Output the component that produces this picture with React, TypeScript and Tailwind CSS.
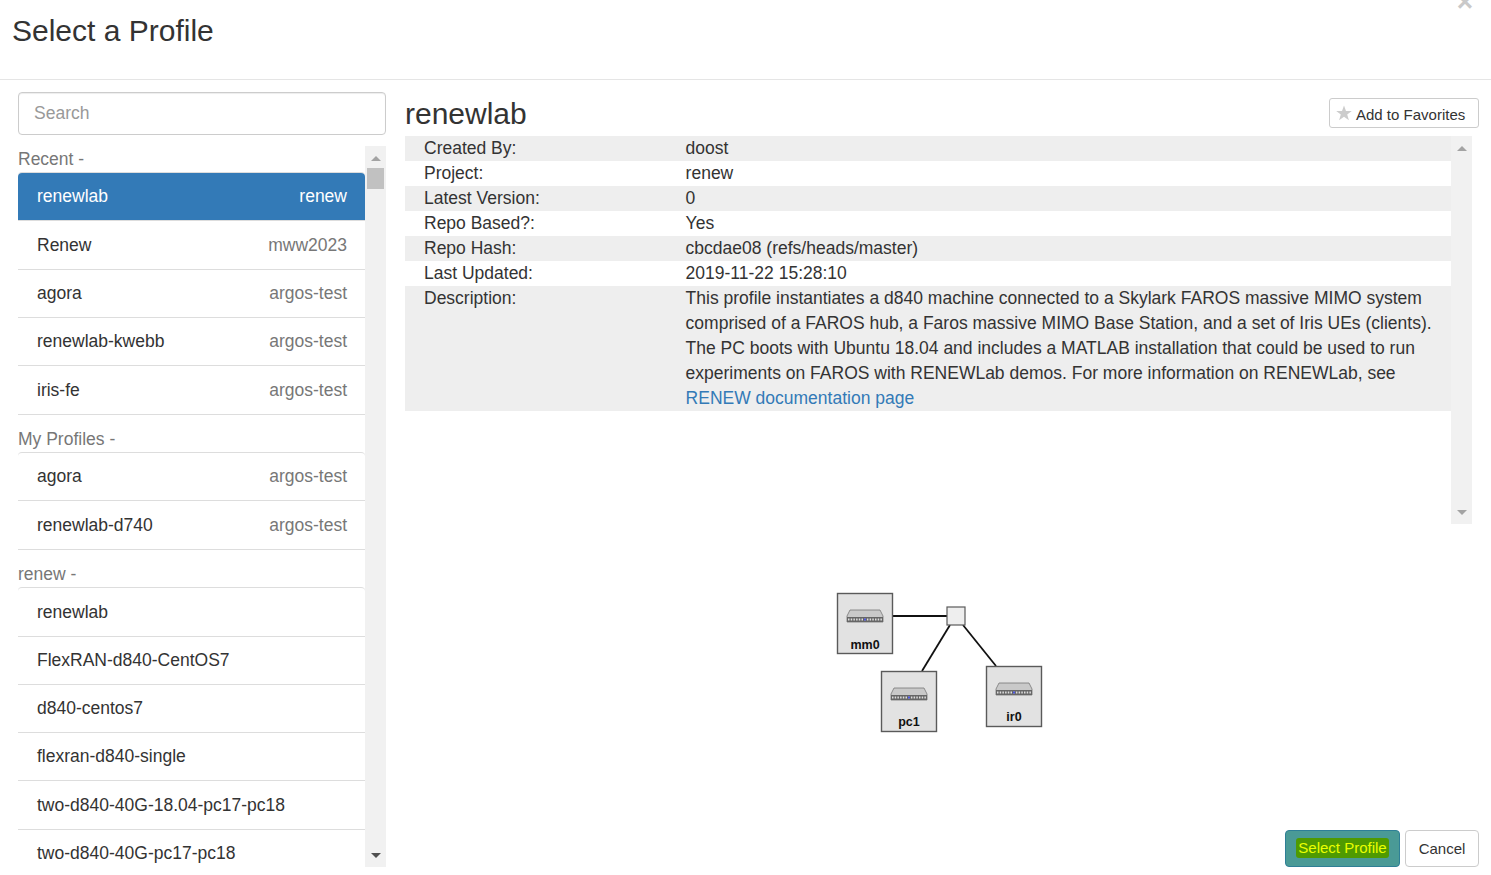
import React from 'react';

type Row = { name: string; owner?: string; active?: boolean; h: string };

const recent: Row[] = [
  { name: 'renewlab', owner: 'renew', active: true, h: 'h-12' },
  { name: 'Renew', owner: 'mww2023', h: 'h-[49px]' },
  { name: 'agora', owner: 'argos-test', h: 'h-12' },
  { name: 'renewlab-kwebb', owner: 'argos-test', h: 'h-12' },
  { name: 'iris-fe', owner: 'argos-test', h: 'h-[49px]' },
];

const mine: Row[] = [
  { name: 'agora', owner: 'argos-test', h: 'h-12' },
  { name: 'renewlab-d740', owner: 'argos-test', h: 'h-[49px]' },
];

const renew: Row[] = [
  { name: 'renewlab', h: 'h-[49px]' },
  { name: 'FlexRAN-d840-CentOS7', h: 'h-12' },
  { name: 'd840-centos7', h: 'h-12' },
  { name: 'flexran-d840-single', h: 'h-12' },
  { name: 'two-d840-40G-18.04-pc17-pc18', h: 'h-[49px]' },
  { name: 'two-d840-40G-pc17-pc18', h: 'h-12' },
];

const details: [string, React.ReactNode][] = [
  ['Created By:', 'doost'],
  ['Project:', 'renew'],
  ['Latest Version:', '0'],
  ['Repo Based?:', 'Yes'],
  ['Repo Hash:', 'cbcdae08 (refs/heads/master)'],
  ['Last Updated:', '2019-11-22 15:28:10'],
  [
    'Description:',
    <>
      This profile instantiates a d840 machine connected to a Skylark FAROS massive MIMO system
      comprised of a FAROS hub, a Faros massive MIMO Base Station, and a set of Iris UEs (clients).
      The PC boots with Ubuntu 18.04 and includes a MATLAB installation that could be used to run
      experiments on FAROS with RENEWLab demos. For more information on RENEWLab, see{' '}
      <a className="text-[#337ab7]">RENEW documentation page</a>
    </>,
  ],
];

function ProfileList({ rows }: { rows: Row[] }) {
  return (
    <div className="rounded-t-[4px] border-t border-[#ddd]">
      {rows.map((r, i) => (
        <div
          key={r.name + i}
          className={`flex items-center justify-between pl-[19px] pr-[18px] border-b border-[#ddd] ${r.h} ${
            r.active ? 'bg-[#337ab7] text-white rounded-t-[4px]' : 'text-[#333]'
          }`}
        >
          <span>{r.name}</span>
          {r.owner && <span className={r.active ? 'text-white' : 'text-[#777]'}>{r.owner}</span>}
        </div>
      ))}
    </div>
  );
}

function Scrollbar({ thumb }: { thumb?: boolean }) {
  return (
    <div className="w-[21px] shrink-0 bg-[#f1f1f1] flex flex-col items-center">
      <div className="h-6 w-full flex items-center justify-center shrink-0">
        <div className="w-0 h-0 border-x-[5px] border-x-transparent border-b-[5px] border-b-[#a3a3a3]" />
      </div>
      {thumb && <div className="w-[17px] h-[21px] bg-[#c1c1c1] mt-[-2px]" />}
      <div className="flex-1" />
      <div className="h-6 w-full flex items-center justify-center shrink-0">
        <div
          className={`w-0 h-0 border-x-[5px] border-x-transparent border-t-[5px] ${
            thumb ? 'border-t-[#505050]' : 'border-t-[#a3a3a3]'
          }`}
        />
      </div>
    </div>
  );
}

function Node({ x, y, label, w = 55, labelY = 56 }: { x: number; y: number; label: string; w?: number; labelY?: number }) {
  const cx = x + w / 2 + 0.5;
  return (
    <g>
      <rect x={x + 0.5} y={y + 0.5} width={w} height={60} fill="#e2e2e2" stroke="#5a5a5a" strokeWidth={1.4} />
      <path
        d={`M${cx - 15} ${y + 17} L${cx + 15} ${y + 17} L${cx + 18} ${y + 23} L${cx + 18} ${y + 29} L${cx - 18} ${y + 29} L${cx - 18} ${y + 23} Z`}
        fill="#c9c9c9"
        stroke="#777"
        strokeWidth={0.8}
      />
      <rect x={cx - 18} y={y + 24} width={36} height={5} fill="#666" />
      <line x1={cx - 17} x2={cx + 17} y1={y + 26.5} y2={y + 26.5} stroke="#ddd" strokeWidth={2} strokeDasharray="1.5 1.2" />
      <rect x={cx - 1} y={y + 25.5} width={2} height={2} fill="#4a55e0" />
      <text
        x={cx}
        y={y + labelY}
        textAnchor="middle"
        fontSize={12.5}
        fontWeight={700}
        fill="#111"
        fontFamily="'Liberation Sans', sans-serif"
      >
        {label}
      </text>
    </g>
  );
}

function Topology() {
  return (
    <svg width={240} height={160} viewBox="820 580 240 160" className="block">
      <line x1={893} y1={616} x2={947} y2={616} stroke="#111" strokeWidth={2.2} />
      <line x1={950} y1={625} x2={922} y2={671} stroke="#111" strokeWidth={1.8} />
      <line x1={963} y1={625} x2={996} y2={666} stroke="#111" strokeWidth={1.8} />
      <Node x={837} y={593} label="mm0" />
      <Node x={881} y={671} label="pc1" labelY={55} />
      <Node x={986} y={666} label="ir0" labelY={55} />
      <rect x={947} y={607} width={18} height={18} fill="#eee" stroke="#5a5a5a" strokeWidth={1.2} />
    </svg>
  );
}

export default function App() {
  return (
    <div className="w-[1491px] h-[875px] overflow-hidden bg-white font-['Liberation_Sans',Arial,sans-serif] text-[17.5px] leading-[25px] text-[#333] relative">
      <header className="h-20 border-b border-[#e5e5e5] pl-3 pt-[13px]">
        <h1 className="text-[30px] leading-[36px]">Select a Profile</h1>
      </header>
      <span className="absolute right-[18px] top-[-12px] text-[28px] font-bold leading-[28px] text-[#c9c9c9]">×</span>

      <div className="flex h-[795px]">
        <aside className="w-[405px] shrink-0 pl-[18px] pr-[19px] pt-3 pb-2 flex flex-col">
          <input
            placeholder="Search"
            className="w-full h-[43px] shrink-0 border border-[#ccc] rounded-[4px] px-[15px] outline-none placeholder:text-[#999] shadow-[inset_0_1px_1px_rgba(0,0,0,0.075)]"
          />
          <div className="flex flex-1 min-h-0 mt-[11px]">
            <div className="flex-1 min-w-0 overflow-hidden pt-[1px]">
              <div className="text-[#777] h-[25px] leading-[24px]">Recent -</div>
              <ProfileList rows={recent} />
              <div className="text-[#777] h-[37px] pt-[12px] leading-[24px]">My Profiles -</div>
              <ProfileList rows={mine} />
              <div className="text-[#777] h-[37px] pt-[12px] leading-[24px]">renew -</div>
              <ProfileList rows={renew} />
            </div>
            <Scrollbar thumb />
          </div>
        </aside>

        <main className="flex-1 min-w-0 flex flex-col pr-3">
          <div className="flex items-start justify-between h-[56px] shrink-0">
            <h2 className="text-[30px] leading-[36px] mt-[16px]">renewlab</h2>
            <button className="mt-[18px] h-[30px] w-[150px] flex items-center pl-[6px] pt-[2px] gap-[4px] border border-[#ccc] rounded-[3px] text-[15px] whitespace-nowrap">
              <svg width={16} height={16} viewBox="0 0 16 16" className="mt-[-3px]">
                <polygon points="8,0.5 10,6 15.8,6 11.2,9.5 12.9,15.3 8,11.8 3.1,15.3 4.8,9.5 0.2,6 6,6" fill="#ccc" />
              </svg>
              Add to Favorites
            </button>
          </div>

          <div className="flex h-[388px] w-[1067px] shrink-0">
            <div className="flex-1 min-w-0">
              {details.map(([k, v], i) => (
                <div key={k as string} className={`flex ${i % 2 === 0 ? 'bg-[#eee]' : 'bg-white'}`}>
                  <div className="w-[280.6px] shrink-0 pl-[19px]">{k}</div>
                  <div className="flex-1 min-w-0 pr-[8px]">{v}</div>
                </div>
              ))}
            </div>
            <Scrollbar />
          </div>

          <div className="flex mt-[56px] pl-[415px] w-[1067px] h-[160px]">
            <Topology />
          </div>

          <div className="flex justify-end gap-[5px] mt-[90px]">
            <button className="w-[115px] h-[37px] rounded-[4px] bg-[#4a9a96] border border-[#2e7f96] text-[15px] flex items-center justify-center">
              <span className="bg-[#4f9a00] text-[#eaff00] rounded-[3px] px-[2px] leading-[20px] mb-[2px]">Select Profile</span>
            </button>
            <button className="w-[74px] h-[37px] rounded-[4px] border border-[#ccc] text-[15px]">Cancel</button>
          </div>
        </main>
      </div>
    </div>
  );
}
